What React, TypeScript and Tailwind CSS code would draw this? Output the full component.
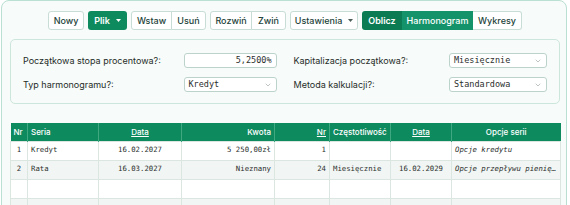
import { ChevronDown } from "lucide-react";

const mono = "font-['DejaVu_Sans_Mono',monospace]";

type Col = {
  label: string;
  w: string;
  head: string;
  cell: string;
  link?: boolean;
};

const cols: Col[] = [
  { label: "Nr", w: "w-[17px]", head: "text-left", cell: "text-center" },
  { label: "Seria", w: "w-[71px]", head: "text-left", cell: "text-left" },
  { label: "Data", w: "w-[83px]", head: "text-center", cell: "text-center", link: true },
  { label: "Kwota", w: "w-[93px]", head: "text-right", cell: "text-right" },
  { label: "Nr", w: "w-[55px]", head: "text-right", cell: "text-right", link: true },
  { label: "Częstotliwość", w: "w-[61px]", head: "text-left", cell: "text-left" },
  { label: "Data", w: "w-[61px]", head: "text-center", cell: "text-center", link: true },
  { label: "Opcje serii", w: "w-[109px]", head: "text-center", cell: "text-left italic" },
];

const rows: string[][] = [
  ["1", "Kredyt", "16.02.2027", "5 250,00zł", "1", "", "", "Opcje kredytu"],
  ["2", "Rata", "16.03.2027", "Nieznany", "24", "Miesięcznie", "16.02.2029", "Opcje przepływu pieniężnego"],
  ["", "", "", "", "", "", "", ""],
  ["", "", "", "", "", "", "", ""],
];

function Caret({ light }: { light?: boolean }) {
  return (
    <svg width="5" height="3" viewBox="0 0 5 3" className="ml-[6px]">
      <path d="M0 0h5L2.5 3z" fill={light ? "#ffffff" : "#4b5d57"} />
    </svg>
  );
}

const btn =
  "flex h-[19px] items-center justify-center border border-[#c7ddd5] bg-white text-[9px] font-medium text-[#23433a]";

function Toolbar() {
  return (
    <div className="flex h-[29px] items-end justify-center gap-1">
      <button className={`${btn} w-[36px] rounded-[3px]`}>Nowy</button>
      <button className="flex h-[19px] w-[39px] items-center justify-center rounded-[3px] bg-[#0e8a5f] text-[9px] font-semibold text-white">
        Plik
        <Caret light />
      </button>
      <div className="flex">
        <button className={`${btn} w-[41px] rounded-l-[3px]`}>Wstaw</button>
        <button className={`${btn} -ml-px w-[35px] rounded-r-[3px]`}>Usuń</button>
      </div>
      <div className="flex">
        <button className={`${btn} w-[42px] rounded-l-[3px]`}>Rozwiń</button>
        <button className={`${btn} -ml-px w-[35px] rounded-r-[3px]`}>Zwiń</button>
      </div>
      <button className={`${btn} w-[68px] rounded-[3px]`}>
        Ustawienia
        <Caret />
      </button>
      <div className="flex">
        <button className="flex h-[19px] w-[40px] items-center justify-center rounded-l-[3px] bg-[#0b7b54] text-[9px] font-semibold text-white">
          Oblicz
        </button>
        <button className="flex h-[19px] w-[71px] items-center justify-center bg-[#14936a] text-[9px] font-medium text-white">
          Harmonogram
        </button>
        <button className={`${btn} w-[49px] rounded-r-[3px] border-l-0`}>Wykresy</button>
      </div>
    </div>
  );
}

function Field({
  label,
  value,
  select,
  w,
}: {
  label: string;
  value: string;
  select?: boolean;
  w: string;
}) {
  return (
    <div className="flex h-[15px] items-center leading-none">
      <span className="flex-1 text-[9px] text-[#1f2d29]">{label}</span>
      <div
        className={`flex h-[15px] ${w} items-center rounded-[3px] border border-[#bcd3cb] bg-white px-[4px] text-[8.5px] text-[#2b2f2e] ${mono}`}
      >
        {select ? (
          <>
            <span className="flex-1">{value}</span>
            <ChevronDown size={8} strokeWidth={1.5} className="text-[#7c8a85]" />
          </>
        ) : (
          <span className="flex-1 text-right">{value}</span>
        )}
      </div>
    </div>
  );
}

function Settings() {
  return (
    <div className="mt-[9px] grid w-[550px] grid-cols-2 gap-x-[17px] gap-y-[9px] rounded-[5px] border border-[#cde6dc] px-[12px] pt-[13px] pb-[11px]">
      <Field label="Początkowa stopa procentowa?:" value="5,2500%" w="w-[93px]" />
      <Field label="Kapitalizacja początkowa?:" value="Miesięcznie" select w="w-[98px]" />
      <Field label="Typ harmonogramu?:" value="Kredyt" select w="w-[93px]" />
      <Field label="Metoda kalkulacji?:" value="Standardowa" select w="w-[98px]" />
    </div>
  );
}

function Schedule() {
  return (
    <table className="mt-[19px] w-[550px] table-fixed border-collapse">
      <thead>
        <tr className="h-[18px] bg-[#0e8a5f] text-[8px] font-medium text-white">
          {cols.map((c, i) => (
            <th
              key={i}
              className={`${c.w} ${c.head} border-l border-[#3fa881] px-[3px] font-medium first:border-l-0 ${c.link ? "underline" : ""}`}
            >
              {c.label}
            </th>
          ))}
        </tr>
      </thead>
      <tbody className={`${mono} text-[7.3px] text-[#2a2f2d]`}>
        {rows.map((r, ri) => (
          <tr key={ri} className={`h-[19px] ${ri % 2 ? "bg-[#f1f5f3]" : "bg-white"}`}>
            {r.map((v, ci) => (
              <td
                key={ci}
                className={`${cols[ci].cell} overflow-hidden text-ellipsis whitespace-nowrap border border-[#dbe6e1] px-[3px]`}
              >
                {v}
              </td>
            ))}
          </tr>
        ))}
      </tbody>
    </table>
  );
}

export default function App() {
  return (
    <div className="h-[205px] w-[570px] overflow-hidden bg-white font-['Inter',sans-serif]">
      <div className="ml-px h-[230px] w-[566px] rounded-lg border border-[#b9e0d1] bg-[#f7fbf9] pl-2 pr-[6px]">
        <Toolbar />
        <Settings />
        <Schedule />
      </div>
    </div>
  );
}
